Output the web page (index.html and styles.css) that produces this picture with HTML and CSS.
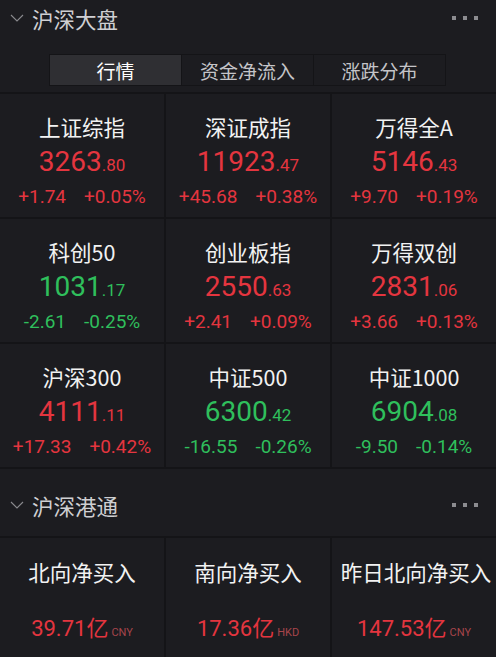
FILE: index.html
```html
<!DOCTYPE html>
<html lang="zh">
<head>
<meta charset="utf-8">
<link rel="stylesheet" href="styles.css">
</head>
<body>
<div class="page">
  <div class="sec-head">
    <svg class="chev" width="14" height="8" viewBox="0 0 14 8"><path d="M1 1 L7 7 L13 1" fill="none" stroke="#8a8a8e" stroke-width="1.1"/></svg>
    <span class="sec-title">沪深大盘</span>
    <span class="dots"><i></i><i></i><i></i></span>
  </div>
  <div class="tabs">
    <div class="tab active">行情</div>
    <div class="tab">资金净流入</div>
    <div class="tab">涨跌分布</div>
  </div>
  <div class="grid idx">
    <div class="cell"><div class="name">上证综指</div><div class="price up">3263<small>.80</small></div><div class="chg up"><span>+1.74</span><span>+0.05%</span></div></div>
    <div class="cell"><div class="name">深证成指</div><div class="price up">11923<small>.47</small></div><div class="chg up"><span>+45.68</span><span>+0.38%</span></div></div>
    <div class="cell"><div class="name">万得全A</div><div class="price up">5146<small>.43</small></div><div class="chg up"><span>+9.70</span><span>+0.19%</span></div></div>
    <div class="cell"><div class="name">科创50</div><div class="price down">1031<small>.17</small></div><div class="chg down"><span>-2.61</span><span>-0.25%</span></div></div>
    <div class="cell"><div class="name">创业板指</div><div class="price up">2550<small>.63</small></div><div class="chg up"><span>+2.41</span><span>+0.09%</span></div></div>
    <div class="cell"><div class="name">万得双创</div><div class="price up">2831<small>.06</small></div><div class="chg up"><span>+3.66</span><span>+0.13%</span></div></div>
    <div class="cell"><div class="name">沪深300</div><div class="price up">4111<small>.11</small></div><div class="chg up"><span>+17.33</span><span>+0.42%</span></div></div>
    <div class="cell"><div class="name">中证500</div><div class="price down">6300<small>.42</small></div><div class="chg down"><span>-16.55</span><span>-0.26%</span></div></div>
    <div class="cell"><div class="name">中证1000</div><div class="price down">6904<small>.08</small></div><div class="chg down"><span>-9.50</span><span>-0.14%</span></div></div>
  </div>
  <div class="sec-head sec2">
    <svg class="chev" width="14" height="8" viewBox="0 0 14 8"><path d="M1 1 L7 7 L13 1" fill="none" stroke="#8a8a8e" stroke-width="1.1"/></svg>
    <span class="sec-title">沪深港通</span>
    <span class="dots"><i></i><i></i><i></i></span>
  </div>
  <div class="grid flow">
    <div class="cell"><div class="name">北向净买入</div><div class="val">39.71亿<small>CNY</small></div></div>
    <div class="cell"><div class="name">南向净买入</div><div class="val">17.36亿<small>HKD</small></div></div>
    <div class="cell"><div class="name wide">昨日北向净买入</div><div class="val">147.53亿<small>CNY</small></div></div>
  </div>
</div>
</body>
</html>
```
FILE: styles.css
```css
html, body {
  margin: 0;
  padding: 0;
  background: #1c1c20;
}
.page {
  width: 496px;
  height: 657px;
  overflow: hidden;
  background: #1c1c20;
  font-family: "Noto Sans CJK SC", "Noto Sans", sans-serif;
  color: #f0f0f0;
}
.sec-head {
  display: flex;
  align-items: center;
  height: 38px;
  padding: 0 18px 0 10px;
}
.chev {
  margin-right: 8px;
  margin-top: -2px;
}
.sec-title {
  font-size: 21.5px;
  color: #cfcfd2;
  line-height: 30px;
  flex: 1;
}
.dots {
  display: flex;
  gap: 7px;
  margin-top: -3px;
}
.dots i {
  width: 4px;
  height: 4px;
  background: #8c8c90;
  display: block;
}
.tabs {
  display: flex;
  margin: 16px 0 0 49px;
  width: 397px;
  height: 32px;
  box-sizing: border-box;
  border: 1px solid #141417;
}
.tab {
  flex: 1;
  display: flex;
  align-items: center;
  justify-content: center;
  font-size: 19px;
  color: #c4c4c8;
  border-left: 1px solid #141417;
}
.tab:first-child {
  border-left: none;
}
.tab.active {
  background: #2f2f33;
  color: #ffffff;
}
.grid {
  display: grid;
  grid-template-columns: 164px 164px 164px;
  column-gap: 2px;
  row-gap: 2px;
  background: #141417;
  border-top: 2px solid #141417;
}
.idx {
  margin-top: 6px;
  border-bottom: 2px solid #141417;
}
.cell {
  background: #1c1c20;
  display: flex;
  flex-direction: column;
  align-items: center;
}
.idx .cell {
  height: 123px;
  padding-top: 18px;
  box-sizing: border-box;
}
.name {
  font-size: 21.5px;
  line-height: 30px;
  color: #f2f2f2;
  white-space: nowrap;
}
.price {
  font-family: Roboto, "Noto Sans", sans-serif;
  font-size: 28px;
  line-height: 40px;
}
.price small {
  font-size: 17px;
}
.chg {
  display: flex;
  gap: 18px;
  font-family: Roboto, "Noto Sans", sans-serif;
  font-size: 19px;
  line-height: 24px;
}
.up { color: #e4353f; }
.down { color: #2fbf5c; }
.sec2 {
  height: 30px;
  padding-top: 22px;
  padding-bottom: 15px;
}
.flow .cell {
  height: 130px;
  padding-top: 19px;
  box-sizing: border-box;
}
.flow .name.wide {
  margin-left: 4px;
}
.val {
  margin-top: 27px;
  font-family: Roboto, "Noto Sans CJK SC", sans-serif;
  font-size: 22px;
  line-height: 30px;
  color: #e4353f;
}
.val small {
  font-size: 11px;
  color: #a7454b;
  margin-left: 3px;
}
```
